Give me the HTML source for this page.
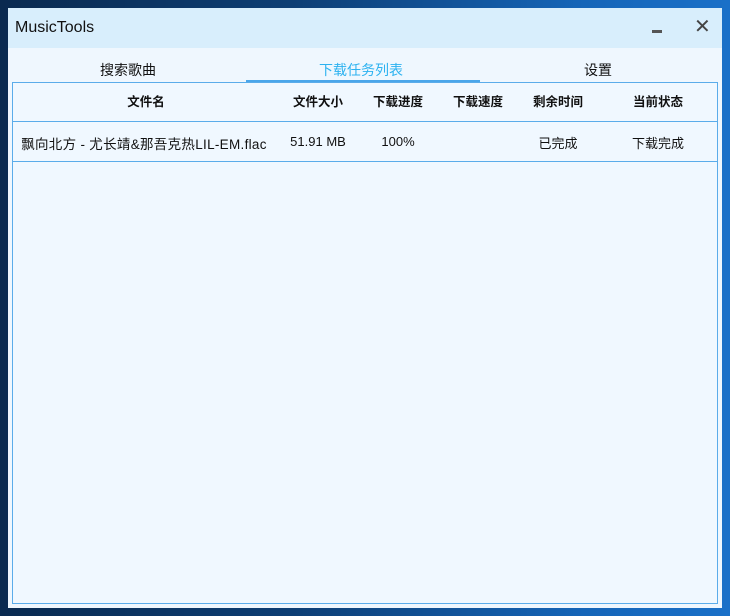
<!DOCTYPE html>
<html><head><meta charset="utf-8"><style>
body{margin:0;width:730px;height:616px;overflow:hidden;background:linear-gradient(90deg,#0a2a50 0%,#0d3e74 40%,#1565b8 80%,#1a70c8 100%);font-family:"Liberation Sans","Noto Sans CJK SC",sans-serif;position:relative}
.win{position:absolute;left:8px;top:8px;width:714px;height:600px;background:#eff7fe}
.title{position:absolute;left:0;top:0;width:714px;height:40px;background:#d8eefc}
.title span{position:absolute;left:7px;top:11px;font-size:16px;color:#111}
.min{position:absolute;left:644px;top:22px;width:10px;height:3px;background:#555}
.x{position:absolute;left:686px;top:9px;font-size:20px;color:#444;line-height:20px}
.tab{position:absolute;top:52px;font-size:14px;color:#111}
.box{position:absolute;left:4px;top:74px;width:704px;height:520px;border:1px solid #5aacea;background:#f0f8ff}
.ul{position:absolute;left:238px;top:72px;width:234px;height:2px;background:#4aa6ea}
.h{position:absolute;top:8px;font-size:12.5px;font-weight:bold;color:#111;transform:translateX(-50%)}
.c{position:absolute;top:51px;font-size:13px;color:#111;transform:translateX(-50%);white-space:nowrap}
.l{position:absolute;left:0;width:704px;height:1px;background:#5aacea}
</style></head><body>
<div class="win">
<div class="title"><span>MusicTools</span><div class="min"></div><div class="x">✕</div></div>
<div class="tab" style="left:92px">搜索歌曲</div>
<div class="tab" style="left:311px;color:#2cb2f0">下载任务列表</div>
<div class="tab" style="left:576px">设置</div>
<div class="box">
<div class="h" style="left:133px">文件名</div>
<div class="h" style="left:305px">文件大小</div>
<div class="h" style="left:385px">下载进度</div>
<div class="h" style="left:465px">下载速度</div>
<div class="h" style="left:545px">剩余时间</div>
<div class="h" style="left:645px">当前状态</div>
<div class="l" style="top:38px"></div>
<div class="c" style="left:131px;top:50px;font-size:13.5px;letter-spacing:0.3px">飘向北方 - 尤长靖&amp;那吾克热LIL-EM.flac</div>
<div class="c" style="left:305px">51.91 MB</div>
<div class="c" style="left:385px">100%</div>
<div class="c" style="left:545px;top:50px">已完成</div>
<div class="c" style="left:645px;top:50px">下载完成</div>
<div class="l" style="top:78px"></div>
</div>
<div class="ul"></div>
</div>
</body></html>
